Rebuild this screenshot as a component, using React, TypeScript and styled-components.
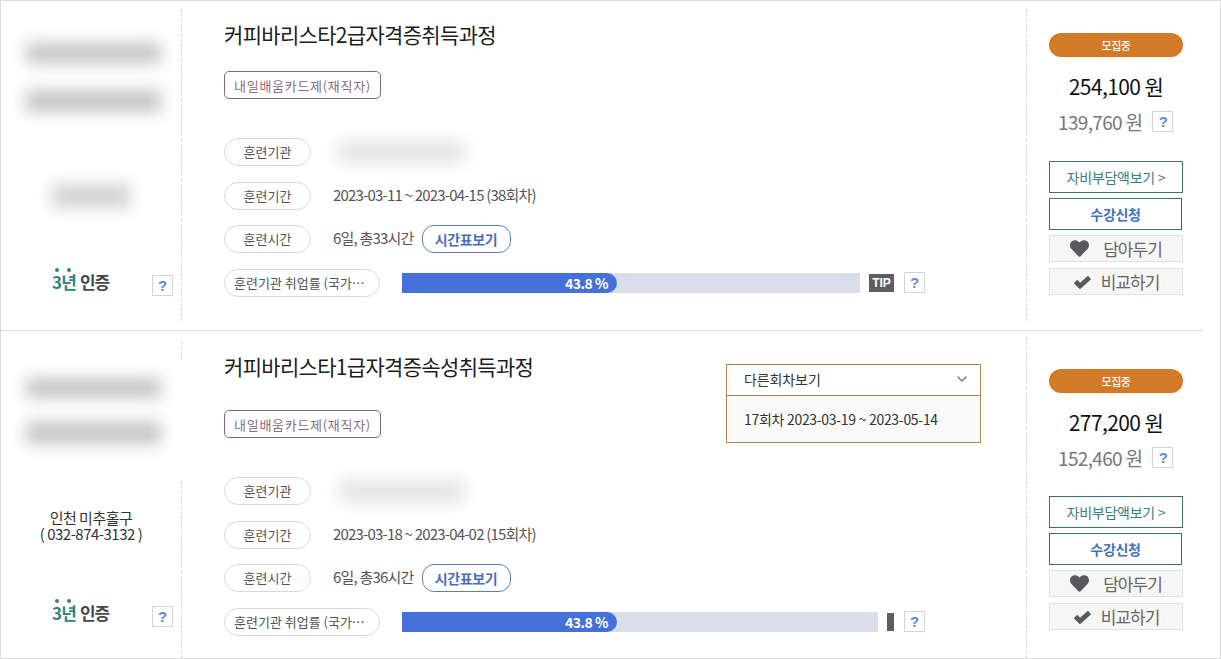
import * as React from 'react'
import styled, { createGlobalStyle } from 'styled-components'
import { FaHeart } from 'react-icons/fa'
import { FiChevronDown } from 'react-icons/fi'

const GlobalStyle = createGlobalStyle`
  html, body { margin: 0; padding: 0; background: #fff; }
  body { font-family: "Noto Sans CJK KR", "Noto Sans", sans-serif; overflow: hidden; }
  * { box-sizing: border-box; }
`

const Page = styled.div`
  width: 1221px;
  height: 659px;
  border: 1px solid #dcdcdc;
  overflow: hidden;
`
const Card = styled.div<{ $h: number; $line?: boolean }>`
  position: relative;
  display: flex;
  width: 1219px;
  height: ${p => p.$h}px;
  &::after {
    content: '';
    display: ${p => (p.$line ? 'block' : 'none')};
    position: absolute;
    left: 0;
    bottom: 0;
    width: 1202px;
    height: 1px;
    background: #dcdcdc;
  }
`
const Side = styled.div<{ $top: number; $second?: boolean }>`
  position: relative;
  width: 181px;
  flex: none;
  padding-top: ${p => p.$top}px;
  border-right: 1px dashed #d6d6d6;
  margin: ${p => (p.$second ? '11px 0 0' : '8px 0 10px')};
`
const BlurZone = styled.div<{ $patch?: boolean }>`
  position: relative;
  z-index: 1;
  background: #fff;
  ${p => (p.$patch ? 'margin-right: -10px; padding-top: 8px; height: 120px;' : '')}
`
const BlurBar = styled.div<{ $w: number; $h: number; $l: number; $mt: number; $shade?: string }>`
  width: ${p => p.$w}px;
  height: ${p => p.$h}px;
  margin: ${p => p.$mt}px 0 0 ${p => p.$l}px;
  background: ${p => p.$shade || '#c4c4c4'};
  filter: blur(8px);
`
const Address = styled.div`
  margin-top: 30px;
  height: 34px;
  text-align: center;
  font-size: 15px;
  line-height: 16px;
  letter-spacing: -0.5px;
  color: #333;
`
const CertRow = styled.div<{ $mt: number }>`
  display: flex;
  align-items: center;
  margin-top: ${p => p.$mt}px;
  height: 26px;
`
const Cert = styled.div`
  position: relative;
  margin-left: 51px;
  width: 100px;
  font-size: 17px;
  font-weight: 700;
  line-height: 26px;
  letter-spacing: -0.9px;
  color: #45494c;
  span { color: #2f8582; margin-right: 4px; }
  &::before, &::after {
    content: '';
    position: absolute;
    top: -1px;
    width: 4px;
    height: 4px;
    border-radius: 50%;
    background: #2f8582;
  }
  &::before { left: 3px; }
  &::after { left: 15px; }
`
const Help = styled.span`
  display: inline-flex;
  align-items: center;
  justify-content: center;
  flex: none;
  width: 21px;
  height: 21px;
  border: 1px solid #d4d4d8;
  background: #fff;
  color: #6688cc;
  font-family: "Liberation Sans", sans-serif;
  font-size: 15px;
  font-weight: 700;
`
const CertHelp = styled(Help)`
  margin-top: 6px;
`
const Main = styled.div<{ $top: number }>`
  position: relative;
  flex: 1;
  padding: ${p => p.$top}px 0 0 42px;
`
const Title = styled.h2`
  margin: 0;
  font-size: 21px;
  font-weight: 400;
  line-height: 30px;
  letter-spacing: -0.68px;
  color: #1c1c1c;
`
const Tag = styled.div<{ $mt: number }>`
  display: flex;
  align-items: center;
  justify-content: center;
  width: 157px;
  height: 28px;
  margin-top: ${p => p.$mt}px;
  border: 1px solid #8d6478;
  border-radius: 5px;
  font-size: 13px;
  letter-spacing: 0.7px;
  color: #8d6a80;
`
const Rows = styled.div<{ $mt: number }>`
  display: flex;
  flex-direction: column;
  gap: 15.5px;
  margin-top: ${p => p.$mt}px;
`
const Row = styled.div`
  display: flex;
  align-items: center;
  height: 28px;
`
const Pill = styled.div<{ $wide?: boolean }>`
  flex: none;
  width: ${p => (p.$wide ? 156 : 87)}px;
  height: 28px;
  padding-left: ${p => (p.$wide ? 9 : 0)}px;
  border: 1px solid #d8d8d8;
  border-radius: 14px;
  font-size: 13px;
  line-height: 26px;
  letter-spacing: 0;
  text-align: ${p => (p.$wide ? 'left' : 'center')};
  color: #555;
  white-space: nowrap;
`
const Value = styled.span`
  margin: 0 0 3px 22px;
  font-size: 15px;
  letter-spacing: -0.8px;
  color: #555;
`
const OrgBlur = styled.div`
  width: 125px;
  height: 20px;
  margin-left: 28px;
  background: #e0e0e0;
  filter: blur(9px);
`
const Timetable = styled.button`
  width: 89px;
  height: 28px;
  margin-left: 8px;
  padding: 0;
  border: 1px solid #5c7fb0;
  border-radius: 12px;
  background: #fff;
  font-family: inherit;
  font-size: 14px;
  font-weight: 700;
  letter-spacing: -0.4px;
  color: #4a6fb8;
`
const Track = styled.div<{ $w: number }>`
  width: ${p => p.$w}px;
  height: 20px;
  margin-left: 22px;
  background: #d8deea;
`
const Fill = styled.div`
  height: 100%;
  padding-right: 9px;
  border-radius: 0 10px 10px 0;
  background: #4470d8;
  font-size: 14px;
  font-weight: 700;
  line-height: 20px;
  letter-spacing: -0.5px;
  text-align: right;
  color: #fff;
`
const TipSlot = styled.div<{ $w: number; $gap: number }>`
  flex: none;
  width: ${p => p.$w}px;
  height: 18px;
  margin: 0 10px 0 ${p => p.$gap}px;
  overflow: hidden;
`
const Tip = styled.div`
  width: 25px;
  height: 18px;
  background: #5d5d62;
  color: #fff;
  font-family: "Liberation Sans", sans-serif;
  font-size: 12px;
  font-weight: 700;
  line-height: 18px;
  text-align: center;
`
const Dropdown = styled.div`
  position: absolute;
  top: 33px;
  left: 544px;
  width: 255px;
  height: 79px;
  border: 1px solid #ad8750;
  background: #fafafa;
`
const DropHead = styled.div`
  display: flex;
  align-items: center;
  justify-content: space-between;
  height: 31px;
  padding: 0 10px 2px 17px;
  border-bottom: 1px solid #ad8750;
  background: #fff;
  font-size: 14px;
  letter-spacing: -0.1px;
  color: #333;
  svg { color: #777; }
`
const DropItem = styled.div`
  height: 46px;
  padding-left: 17px;
  font-size: 14px;
  line-height: 46px;
  letter-spacing: -0.3px;
  color: #333;
`
const Action = styled.div<{ $top: number; $second?: boolean }>`
  flex: none;
  width: 194px;
  margin: ${p => (p.$second ? '6px 0 0' : '8px 0 10px')};
  padding: ${p => p.$top}px 37px 0 22px;
  border-left: 1px dashed #d6d6d6;
`
const Status = styled.div`
  height: 24px;
  border-radius: 12px;
  background: #d17a28;
  color: #fff;
  font-size: 11px;
  font-weight: 500;
  line-height: 24px;
  letter-spacing: -0.4px;
  text-align: center;
`
const Price = styled.div`
  margin-top: 13px;
  font-size: 21px;
  line-height: 32px;
  letter-spacing: -0.6px;
  text-align: center;
  color: #111;
`
const SubPrice = styled.div`
  display: flex;
  align-items: center;
  margin-top: 3px;
  padding-left: 9px;
  height: 32px;
  font-size: 19px;
  letter-spacing: -0.65px;
  color: #777;
  ${Help} { margin-left: 10px; }
`
const Buttons = styled.div<{ $mt: number }>`
  display: flex;
  flex-direction: column;
  margin-top: ${p => p.$mt}px;
`
const CostBtn = styled.div`
  height: 32px;
  border: 1px solid #3f7373;
  font-size: 14px;
  line-height: 30px;
  letter-spacing: -0.25px;
  text-align: center;
  color: #3b7d7a;
`
const ApplyBtn = styled.div`
  width: 133px;
  height: 32px;
  margin: 5px 0;
  border: 1px solid #3d6788;
  font-size: 14px;
  font-weight: 700;
  line-height: 30px;
  letter-spacing: -0.3px;
  text-align: center;
  color: #4470c4;
`
const GrayBtn = styled.div<{ $gap: number }>`
  display: flex;
  align-items: center;
  justify-content: center;
  gap: ${p => p.$gap}px;
  height: 27px;
  margin-bottom: 6px;
  border: 1px solid #e2e2e2;
  background: #f6f6f6;
  font-size: 17px;
  letter-spacing: -1px;
  color: #666;
  svg { color: #58585e; }
`

const CheckMark = () => (
  <svg width="19" height="15" viewBox="0 0 19 15" fill="none">
    <path d="M2.5 7.5 L7 12 L16.5 3.5" stroke="currentColor" strokeWidth="4.8" />
  </svg>
)

type CourseProps = {
  title: string
  period: string
  hours: string
  price: string
  sub: string
  h: number
  line?: boolean
  second?: boolean
}

const Course = ({ title, period, hours, price, sub, h, line, second }: CourseProps) => (
  <Card $h={h} $line={line}>
    <Side $top={second ? 18 : 25} $second={second}>
      <BlurZone $patch={second}>
        <BlurBar $w={135} $h={20} $l={25} $mt={second ? 10 : 9} />
        <BlurBar $w={135} $h={22} $l={25} $mt={second ? 24 : 27} />
      </BlurZone>
      {second ? (
        <Address>
          인천 미추홀구
          <br />( 032-874-3132 )
        </Address>
      ) : (
        <BlurBar $w={78} $h={24} $l={51} $mt={72} $shade="#d2d2d2" />
      )}
      <CertRow $mt={second ? 56 : 61}>
        <Cert>
          <span>3년</span>인증
        </Cert>
        <CertHelp>?</CertHelp>
      </CertRow>
    </Side>
    <Main $top={second ? 20 : 18}>
      <Title>{title}</Title>
      <Tag $mt={second ? 29 : 22}>내일배움카드제(재직자)</Tag>
      <Rows $mt={39}>
        <Row>
          <Pill>훈련기관</Pill>
          <OrgBlur />
        </Row>
        <Row>
          <Pill>훈련기간</Pill>
          <Value>{period}</Value>
        </Row>
        <Row>
          <Pill>훈련시간</Pill>
          <Value>{hours}</Value>
          <Timetable>시간표보기</Timetable>
        </Row>
        <Row>
          <Pill $wide>훈련기관 취업률 (국가…</Pill>
          <Track $w={second ? 476 : 458}>
            <Fill style={{ width: 215 }}>43.8 %</Fill>
          </Track>
          <TipSlot $w={second ? 7 : 25} $gap={9}>
            <Tip>{second ? '' : 'TIP'}</Tip>
          </TipSlot>
          <Help>?</Help>
        </Row>
      </Rows>
      {second && (
        <Dropdown>
          <DropHead>
            다른회차보기
            <FiChevronDown size={16} />
          </DropHead>
          <DropItem>17회차 2023-03-19 ~ 2023-05-14</DropItem>
        </Dropdown>
      )}
    </Main>
    <Action $top={second ? 32 : 24} $second={second}>
      <Status>모집중</Status>
      <Price>{price} 원</Price>
      <SubPrice>
        {sub} 원<Help>?</Help>
      </SubPrice>
      <Buttons $mt={second ? 23 : 24}>
        <CostBtn>자비부담액보기 &gt;</CostBtn>
        <ApplyBtn>수강신청</ApplyBtn>
        <GrayBtn $gap={14}>
          <FaHeart size={19} />
          담아두기
        </GrayBtn>
        <GrayBtn $gap={9}>
          <CheckMark />
          비교하기
        </GrayBtn>
      </Buttons>
    </Action>
  </Card>
)

const App = () => (
  <Page>
    <GlobalStyle />
    <Course
      h={330}
      line
      title="커피바리스타2급자격증취득과정"
      period="2023-03-11 ~ 2023-04-15 (38회차)"
      hours="6일, 총33시간"
      price="254,100"
      sub="139,760"
    />
    <Course
      h={327}
      second
      title="커피바리스타1급자격증속성취득과정"
      period="2023-03-18 ~ 2023-04-02 (15회차)"
      hours="6일, 총36시간"
      price="277,200"
      sub="152,460"
    />
  </Page>
)

export default App
